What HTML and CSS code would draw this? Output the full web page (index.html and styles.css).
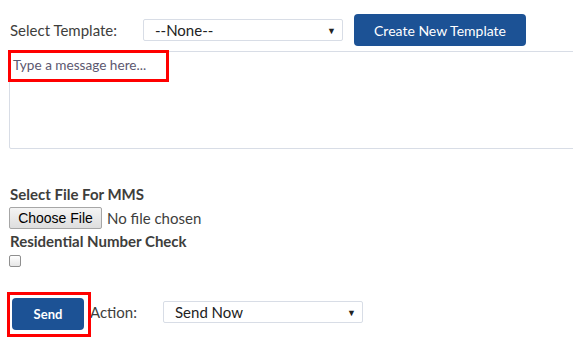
FILE: index.html
```html
<!DOCTYPE html>
<html>
<head>
<meta charset="utf-8">
<link rel="stylesheet" href="styles.css">
</head>
<body>
<div class="page">
  <div class="template-row">
    <label class="label">Select Template:</label>
    <div class="select sel-template"><span>--None--</span><span class="arrow">&#9660;</span></div>
    <button class="btn btn-create">Create New Template</button>
  </div>
  <div class="message-wrap">
    <div class="message"><span class="placeholder">Type a message here...</span></div>
    <div class="highlight hl-message"></div>
  </div>
  <div class="mms">
    <div class="bold-label">Select File For MMS</div>
    <div class="file-row"><span class="file-btn">Choose File</span><span class="file-text">No file chosen</span></div>
    <div class="bold-label">Residential Number Check</div>
    <div class="checkbox"></div>
  </div>
  <div class="send-row">
    <div class="send-wrap">
      <button class="btn btn-send">Send</button>
      <div class="highlight hl-send"></div>
    </div>
    <span class="action-label">Action:</span>
    <div class="select sel-action"><span>Send Now</span><span class="arrow">&#9660;</span></div>
  </div>
</div>
</body>
</html>
```
FILE: styles.css
```css
html, body {
  margin: 0;
  padding: 0;
  background: #ffffff;
  overflow: hidden;
}
.page {
  font-family: Lato, "Open Sans", sans-serif;
  font-size: 15px;
  line-height: 17px;
  color: #3e3e3c;
  width: 573px;
  height: 346px;
  overflow: hidden;
}
.template-row {
  display: flex;
  align-items: center;
  padding: 14px 0 0 10px;
  height: 32px;
}
.label {
  width: 133px;
  color: #3e3e3c;
}
.select {
  box-sizing: border-box;
  height: 22px;
  width: 200px;
  border: 1px solid #d8dde6;
  border-radius: 2px;
  display: flex;
  align-items: center;
  justify-content: space-between;
  padding: 0 6px 0 11px;
  color: #222;
}
.arrow {
  font-size: 9px;
  color: #222;
}
.btn {
  font-family: Lato, "Open Sans", sans-serif;
  background: #1c5295;
  color: #ffffff;
  border: none;
  border-radius: 4px;
  font-size: 14px;
  cursor: pointer;
}
.btn-create {
  margin-left: 11px;
  width: 172px;
  height: 32px;
  padding: 0;
}
.message-wrap {
  position: relative;
  margin: 5px 0 0 9px;
}
.message {
  box-sizing: border-box;
  width: 620px;
  height: 98px;
  border: 1px solid #d8dde6;
  border-radius: 2px;
  padding: 4px 0 0 3px;
}
.placeholder {
  color: #5c5870;
  font-size: 13.6px;
}
.highlight {
  position: absolute;
  border: 3px solid #ff0000;
  box-sizing: border-box;
}
.hl-message {
  left: -1px;
  top: -1px;
  width: 161px;
  height: 32px;
}
.mms {
  padding: 37px 0 0 10px;
}
.bold-label {
  font-weight: bold;
  font-size: 15px;
  line-height: 17px;
  color: #3e3e3c;
}
.file-row {
  display: flex;
  align-items: center;
  margin: 4px 0 4px -1px;
  height: 22px;
}
.file-btn {
  box-sizing: border-box;
  height: 22px;
  width: 93px;
  display: flex;
  align-items: center;
  justify-content: center;
  font-family: "Liberation Sans", Arial, sans-serif;
  font-size: 14px;
  color: #000;
  border: 1px solid #a6a6a6;
  border-radius: 2px;
  background: linear-gradient(#f4f4f4, #dedede);
}
.file-text {
  margin-left: 5px;
  color: #3e3e3c;
}
.checkbox {
  box-sizing: border-box;
  width: 12px;
  height: 12px;
  margin: 5px 0 0 -1px;
  border: 1px solid #8f8f8f;
  border-radius: 2px;
  background: linear-gradient(#ffffff, #e6e6e6);
}
.send-row {
  display: flex;
  align-items: center;
  padding: 25px 0 0 7px;
}
.send-wrap {
  position: relative;
  box-sizing: border-box;
  width: 84px;
  height: 45px;
  padding: 6px 0 0 5px;
}
.btn-send {
  width: 72px;
  height: 32px;
  padding: 0;
  font-weight: bold;
  font-size: 13px;
}
.hl-send {
  left: 0;
  top: 0;
  width: 84px;
  height: 45px;
}
.action-label {
  margin: -4px 0 0 -1px;
  width: 73px;
  color: #3e3e3c;
}
.sel-action {
  margin-top: -5px;
}
```
